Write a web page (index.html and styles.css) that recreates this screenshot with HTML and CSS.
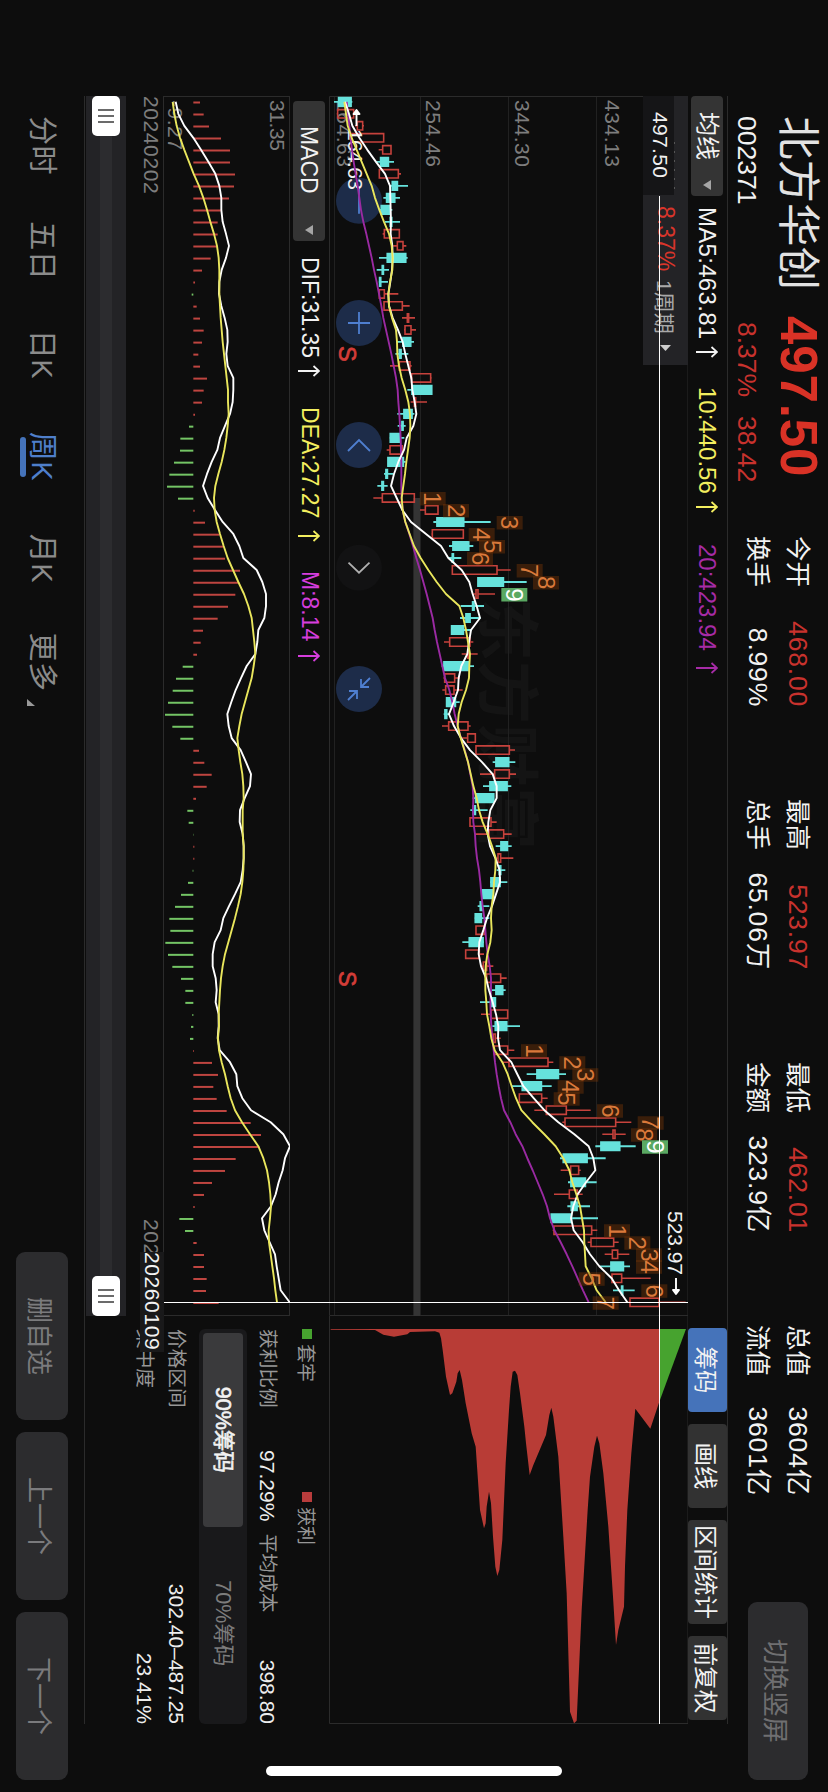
FILE: index.html
```html
<!DOCTYPE html>
<html lang="zh-CN">
<head>
  <meta charset="UTF-8" />
  <meta name="viewport" content="width=device-width, initial-scale=1.0" />
  <title>北方华创 002371</title>
  <link rel="stylesheet" href="styles.css">
</head>
<body>
  <div class="device">
  <div class="screen">
    <header class="header">
      <div class="quote">
        <div class="quote-main"><span class="name">北方华创</span><span class="price">497.50</span></div>
        <div class="quote-sub"><span class="code">002371</span><span class="pct">8.37%</span><span class="diff">38.42</span></div>
      </div>
      <div class="stats">
        <div class="stat"><span>今开</span><b class="red">468.00</b><span>换手</span><b>8.99%</b></div>
        <div class="stat"><span>最高</span><b class="red">523.97</b><span>总手</span><b>65.06万</b></div>
        <div class="stat"><span>最低</span><b class="red">462.01</b><span>金额</span><b>323.9亿</b></div>
        <div class="stat"><span>总值</span><b>3604亿</b><span>流值</span><b>3601亿</b></div>
      </div>
      <button class="btn-rotate">切换竖屏</button>
    </header>

    <div class="toolbar">
      <button class="select">均线<i class="caret"></i></button>
      <span class="ind ma5">MA5:463.81<svg class="up" viewBox="0 0 12 22"><path d="M6 22V1M1 6.5L6 1L11 6.5" /></svg></span>
      <span class="ind ma10">10:440.56<svg class="up" viewBox="0 0 12 22"><path d="M6 22V1M1 6.5L6 1L11 6.5" /></svg></span>
      <span class="ind ma20">20:423.94<svg class="up" viewBox="0 0 12 22"><path d="M6 22V1M1 6.5L6 1L11 6.5" /></svg></span>
      <div class="tools">
        <button class="tool active">筹码</button>
        <button class="tool">画线</button>
        <button class="tool wide">区间统计</button>
        <button class="tool">前复权</button>
      </div>
    </div>

    <div class="charts">
      <svg id="kline" width="1220" height="359" viewBox="0 0 1220 359"></svg>
      <svg id="chips" width="408" height="359" viewBox="0 0 408 359"></svg>
    </div>

    <div class="lower">
      <div class="lower-left">
        <div class="macd-bar">
          <button class="select macd-select">MACD<i class="caret"></i></button>
          <span class="ind dif">DIF:31.35<svg class="up" viewBox="0 0 12 22"><path d="M6 22V1M1 6.5L6 1L11 6.5" /></svg></span>
          <span class="ind dea">DEA:27.27<svg class="up" viewBox="0 0 12 22"><path d="M6 22V1M1 6.5L6 1L11 6.5" /></svg></span>
          <span class="ind m">M:8.14<svg class="up" viewBox="0 0 12 22"><path d="M6 22V1M1 6.5L6 1L11 6.5" /></svg></span>
        </div>
        <svg id="macd" width="1220" height="127" viewBox="0 0 1220 127"></svg>
        <div class="dates"><span>20240202</span><span class="date-end">20260109</span></div>
        <div class="slider">
          <div class="track"></div>
          <div class="handle"><i></i><i></i><i></i></div>
          <div class="handle"><i></i><i></i><i></i></div>
        </div>
      </div>
      <div class="panel">
        <div class="legend">
          <span><i class="dot green"></i>套牢</span>
          <span><i class="dot"></i>获利</span>
        </div>
        <div class="row"><span>获利比例</span><b class="mid">97.29%</b><span>平均成本</span><b>398.80</b></div>
        <div class="seg">
          <div class="seg-item on">90%筹码</div>
          <div class="seg-item">70%筹码</div>
        </div>
        <div class="row range"><span>价格区间</span><b>302.40–487.25</b></div>
        <div class="row focus"><span>集中度</span><b>23.41%</b></div>
      </div>
    </div>

    <footer class="footer">
      <nav class="tabs">
        <span>分时</span>
        <span>五日</span>
        <span class="k">日K</span>
        <span class="k on">周K</span>
        <span class="k">月K</span>
        <span>更多<i class="more"></i></span>
      </nav>
      <div class="actions">
        <button>删自选</button>
        <button>上一个</button>
        <button>下一个</button>
      </div>
    </footer>

    <div class="cross-h"></div>
    <div class="cross-v"></div>
    <div class="date-tag">20260109</div>
    <div class="home"></div>
  </div>
  </div>

  <script src="chart.js"></script>
</body>
</html>
```
FILE: styles.css
```css
* {
  box-sizing: border-box;
}
body {
  margin: 0;
  background: #0d0d0d;
  font-family: "Liberation Sans", "Noto Sans CJK SC", sans-serif;
  color: #f2f2f2;
}
.device {
  width: 828px;
  height: 1792px;
  overflow: hidden;
}
/* landscape screen turned clockwise */
.screen {
  position: relative;
  width: 1792px;
  height: 828px;
  padding-left: 96px;
  transform-origin: 0 0;
  transform: translateX(828px) rotate(90deg);
  background: #0d0d0d;
}
button {
  border: 0;
  padding: 0;
  font-family: inherit;
  color: inherit;
}
b {
  font-weight: normal;
}
.red {
  color: #c8322d;
}

/* header */
.header {
  display: flex;
  height: 100px;
  width: 1684px;
}
.quote {
  width: 440px;
  padding-left: 20px;
}
.quote-main {
  display: flex;
  align-items: center;
  height: 60px;
}
.name {
  width: 200px;
  font-size: 43.5px;
  line-height: 60px;
  color: #e2e2e2;
}
.price {
  font-size: 51px;
  font-weight: bold;
  line-height: 60px;
  letter-spacing: 0.9px;
  color: #d93226;
}
.quote-sub {
  display: flex;
  align-items: center;
  height: 42px;
  font-size: 26.5px;
}
.code {
  width: 206px;
}
.pct, .diff {
  color: #c8322d;
}
.pct {
  width: 94px;
}
.stats {
  display: flex;
  gap: 92px;
  padding-top: 10px;
}
.stat {
  display: grid;
  grid-template-columns: auto 1fr;
  grid-template-rows: 40px 40px;
  align-items: center;
  width: 171px;
  font-size: 25.5px;
  line-height: 40px;
}
.stat b {
  text-align: right;
  font-size: 26.5px;
  letter-spacing: 0.8px;
}
.btn-rotate {
  width: 178px;
  height: 60px;
  margin: 20px 0 0 auto;
  border-radius: 9px;
  background: #2c2c2e;
  color: #6f6f71;
  font-size: 26px;
}

/* indicator bar */
.toolbar {
  display: flex;
  align-items: center;
  width: 1628px;
  height: 40px;
  border-top: 1px solid #2b2b2b;
}
.select {
  display: flex;
  align-items: center;
  justify-content: space-between;
  width: 100px;
  height: 32px;
  padding: 0 6px 0 16px;
  border-radius: 4px;
  background: #343434;
  font-size: 24px;
  line-height: 32px;
}
.caret {
  border: 5px solid transparent;
  border-top: 8px solid #a5a5a5;
  border-bottom: 0;
}
.ind {
  display: flex;
  align-items: center;
  justify-content: space-between;
  font-size: 24px;
}
.up {
  flex-shrink: 0;
  width: 12px;
  height: 22px;
  fill: none;
  stroke: currentColor;
  stroke-width: 1.8;
}
.ma5 {
  width: 151px;
  margin-left: 11px;
  letter-spacing: 0.3px;
}
.ma10 {
  width: 126px;
  margin-left: 29px;
  color: #f3ee5f;
}
.ma20 {
  width: 130px;
  margin-left: 31px;
  color: #a62ba6;
}
.tools {
  display: flex;
  gap: 12px;
  margin-left: auto;
  padding-right: 4px;
}
.tool {
  width: 84px;
  height: 39px;
  border-radius: 4px;
  background: #323232;
  font-size: 23.5px;
}
.tool.wide {
  width: 104px;
}
.tool.active {
  background: #4573ba;
}

/* charts */
.charts {
  display: flex;
}
svg text {
  font-size: 21px;
}
.charts svg, #macd {
  display: block;
}
.frame {
  fill: none;
  stroke: #2b2b2b;
}
.grid {
  stroke: #212121;
}
.axis {
  fill: #7d7d7d;
}
.mark {
  fill: #f0f0f0;
}
.watermark {
  fill: #141414;
  font-weight: bold;
}
svg .watermark {
  font-size: 63px;
}
.band {
  fill: #343434;
}
.up-k {
  stroke: #c6423c;
  fill: none;
  stroke-width: 1.6;
}
.down-k {
  stroke: #66e2dc;
  fill: #66e2dc;
  stroke-width: 1.8;
}
.line {
  fill: none;
  stroke-width: 1.9;
  stroke-linejoin: round;
}
.white {
  stroke: #fff;
}
.yellow {
  stroke: #e9e65c;
}
.purple {
  stroke: #9a2aa2;
}
.bar-up {
  stroke: #bf4540;
  stroke-width: 2;
}
.bar-down {
  stroke: #74c565;
  stroke-width: 2;
}
.nine-box {
  fill: #7a3606;
  fill-opacity: 0.42;
}
.nine-box.last {
  fill: #5aa862;
  fill-opacity: 1;
}
svg .nine {
  font-size: 24px;
  fill: #d9793a;
  text-anchor: middle;
}
svg .nine.last {
  fill: #fff;
}
svg .sell {
  font-size: 23.5px;
  fill: #d33d38;
  stroke: #d33d38;
  stroke-width: 0.7;
}
.knob {
  fill: #1d2c49;
}
.knob.off {
  fill: #121213;
}
.knob-icon {
  fill: none;
  stroke: #4f7fd0;
  stroke-width: 1.8;
}
.knob-icon.off {
  stroke: #b0b0b0;
}
.tip {
  fill: #232326;
}
.tip-dark {
  fill: #151517;
}
svg .tip-red {
  font-size: 23px;
  fill: #d8352b;
}
svg .tip-text {
  font-size: 21px;
  fill: #a8a8a8;
}
.win {
  fill: #b83c36;
}
.lose {
  fill: #47a32f;
}

/* macd */
.lower {
  display: flex;
  height: 245px;
  width: 1628px;
  border-bottom: 1px solid #2b2b2b;
}
.lower-left {
  width: 1220px;
}
.macd-bar {
  display: flex;
  align-items: center;
  height: 39px;
}
.macd-bar .ind {
  font-size: 23px;
}
.macd-select {
  width: 140px;
  margin-left: 5px;
  padding-left: 25px;
  font-size: 23px;
}
.dif {
  width: 120px;
  margin-left: 16px;
}
.dea {
  width: 135px;
  margin-left: 30px;
  color: #f3ee5f;
}
.m {
  width: 91px;
  margin-left: 29px;
  color: #d63ddd;
}
.dates {
  display: flex;
  justify-content: space-between;
  height: 37px;
  font-size: 21px;
  line-height: 24px;
  letter-spacing: 0.6px;
  color: #7d7d7d;
}
.dates .date-end {
  width: 97px;
}
.slider {
  display: flex;
  align-items: center;
  justify-content: space-between;
  position: relative;
  height: 40px;
  background: #232326;
}
.track {
  position: absolute;
  left: 0;
  right: 0;
  top: 14px;
  height: 12px;
  background: #2c2c2f;
}
.handle {
  display: flex;
  flex-direction: row;
  align-items: center;
  justify-content: center;
  gap: 4px;
  position: relative;
  width: 40px;
  height: 28px;
  border-radius: 5px;
  background: #fff;
}
.handle i {
  width: 2px;
  height: 16px;
  background: #6b6b6b;
}

/* chips panel */
.panel {
  width: 395px;
  margin-left: 13px;
  font-size: 20px;
  color: #979797;
}
.legend {
  display: flex;
  height: 43px;
}
.legend span {
  display: flex;
  align-items: center;
  width: 163px;
  font-size: 19px;
}
.dot {
  width: 10px;
  height: 10px;
  margin-right: 5px;
  background: #b83c3c;
}
.dot.green {
  background: #47a32f;
}
.row {
  display: flex;
  align-items: center;
  justify-content: space-between;
  height: 37px;
  font-size: 19.7px;
  line-height: 37px;
}
.row b {
  font-size: 21px;
  color: #ededed;
}
.row .mid {
  margin-left: 30px;
}
.row .mid + span {
  margin-right: 35px;
}
.seg {
  display: flex;
  height: 48px;
  margin-top: 2px;
  padding: 4px;
  border-radius: 6px;
  background: #19191b;
}
.seg-item {
  flex: 1;
  border-radius: 4px;
  font-size: 21.5px;
  line-height: 40px;
  text-align: center;
  color: #7c7c7c;
}
.seg-item.on {
  background: #3a3a3c;
  -webkit-text-stroke: 0.6px #f2f2f2;
  color: #f2f2f2;
}
.range {
  margin-top: 4px;
}
.focus {
  height: 27px;
}

/* footer */
.footer {
  display: flex;
  width: 1684px;
  height: 84px;
}
.tabs {
  display: flex;
  gap: 46px;
  padding: 20px 0 0 20px;
  font-size: 29px;
  line-height: 44px;
  letter-spacing: 0.6px;
  color: #8b8b8b;
}
.tabs span {
  position: relative;
  height: 44px;
  white-space: nowrap;
}
.tabs .k {
  width: 56px;
  text-align: center;
}
.tabs .on {
  color: #4f7fcb;
}
.tabs .on::after {
  content: "";
  position: absolute;
  left: 9px;
  top: 38px;
  width: 40px;
  height: 6px;
  border-radius: 3px;
  background: #4573ba;
}
.more {
  position: absolute;
  left: 67px;
  top: 29px;
  border-left: 7px solid transparent;
  border-bottom: 8px solid #999;
}
.actions {
  display: flex;
  gap: 12px;
  margin-left: auto;
  padding-top: 16px;
}
.actions button {
  width: 168px;
  height: 52px;
  border-radius: 9px;
  background: #2c2c2e;
  color: #7b7b7d;
  font-size: 26px;
}

/* crosshair */
.cross-h {
  position: absolute;
  left: 196px;
  top: 168px;
  width: 1528px;
  height: 1px;
  background: #fff;
}
.cross-v {
  position: absolute;
  left: 1302px;
  top: 140px;
  width: 1px;
  height: 525px;
  background: #fff;
}
.date-tag {
  position: absolute;
  left: 1252px;
  top: 664px;
  width: 100px;
  height: 24px;
  background: #19191a;
  font-size: 21px;
  line-height: 24px;
  letter-spacing: 0.6px;
}
.home {
  position: absolute;
  left: 1766px;
  top: 266px;
  width: 10px;
  height: 296px;
  border-radius: 5px;
  background: #fff;
}
```
FILE: chart.js
```js
const NS = 'http://www.w3.org/2000/svg';

function add(svg, tag, attrs, text) {
  const el = document.createElementNS(NS, tag);
  for (const k in attrs) el.setAttribute(k, attrs[k]);
  if (text !== undefined) el.textContent = text;
  svg.appendChild(el);
  return el;
}

const px = i => +(5.8 + i * 12.005).toFixed(2);
const ky = v => +(368 - v / 3).toFixed(2);
const my = v => +(290 - v / 3).toFixed(2);

// direction, low, body low, body high, high
const candles = `c 42 56 93 97|r 50 53 101 103|r 105 112 128 132|r 93 95 191 191|r 176 188 213 213|c 170 182 205 222
r 176 178 235 243|c 208 217 232 264|c 190 200 224 240|c 178 184 210 217|c 195 211 215 240|r 188 193 238 240
r 220 232 249 259|c 177 202 257 263|c 170 187 190 207|c 176 179 182 204|r 176 178 193 235|r 190 192 247 269
r 246 262 266 285|r 252 255 273 288|c 230 249 272 282|c 226 238 243 265|r 210 238 270 275|r 270 275 332 335
c 262 276 335 335|r 272 283 287 321|c 232 252 276 283|c 233 246 249 257|c 208 211 238 253|r 200 210 247 247
c 203 204 250 257|c 192 198 202 220|c 172 186 190 203|r 160 187 283 283|r 300 316 354 354|c 340 351 431 512
r 334 337 430 430|c 387 399 446 460|c 387 397 400 424|r 395 397 531 572|c 472 474 550 620|r 458 468 474 525
c 422 458 462 492|c 420 438 450 482|c 394 395 430 455|r 372 389 450 460|r 425 443 447 473|c 365 372 446 462
r 370 374 404 420|r 367 377 402 428|c 378 380 406 419|c 371 375 380 388|r 366 386 444 452|r 425 443 466 466
r 466 468 568 585|c 518 528 566 586|r 480 524 568 588|c 489 510 561 574|c 458 467 521 521|c 451 460 466 503
r 448 450 513 530|r 466 507 551 575|c 527 543 562 575|r 530 534 542 580|c 530 538 542 556|c 510 513 540 562
c 487 487 520 520|c 473 481 486 508|c 463 466 484 508|r 466 468 493 497|c 427 448 489 492|r 435 437 478 492
r 485 490 500 520|r 497 500 542 560|c 516 528 548 557|c 480 513 526 528|r 483 513 563 563|c 517 526 560 600
r 515 520 526 542|r 520 523 563 583|r 545 567 684 700|c 620 651 715 738|c 575 607 664 695|r 596 598 665 683
r 643 679 739 812|r 727 735 887 934|r 847 879 885 917|c 826 843 899 947|c 720 730 801 857|r 722 752 776 782
c 744 753 796 830|r 702 748 772 788|c 742 754 771 810|c 693 694 754 834|r 698 702 815 832|r 803 813 881 896
r 854 877 893 928|c 840 873 910 930|r 873 876 905 992|c 879 905 908 944|r 925 930 1017 1097`
  .split(/[|\n]/).map(s => s.split(' ')).map(([dir, ...v]) => ({ dir, v: v.map(Number) }));

const ma5 = [75,87,97,118,142,168,195,210,211,212,213,212,217,218,216,211,205,207,218,234,248,256,265,274,277,
  284,289,280,260,252,235,222,213,230,247,273,318,363,385,425,448,458,470,480,453,447,442,424,416,414,
  401,387,402,423,450,486,518,530,530,511,505,503,510,526,539,540,528,516,501,490,478,476,483,498,507,
  518,528,535,534,540,574,592,610,641,673,715,763,806,820,826,798,773,760,753,761,788,810,838,875,897,922];
const ma10 = [73,78,83,95,110,125,140,155,165,178,192,207,215,218,217,210,205,207,216,228,231,232,237,245,256,
  265,270,271,269,264,259,255,250,245,248,256,269,282,302,325,350,378,418,430,438,444,450,448,447,438,
  425,416,413,422,433,444,452,460,470,477,488,503,516,527,526,522,520,515,513,515,511,502,497,496,496,
  499,501,508,514,524,547,563,575,588,604,637,673,707,730,748,757,769,780,786,792,793,795,797,815,830,857];
const ma20 = [80,84,88,92,96,101,107,113,118,123,130,139,147,155,162,170,177,184,190,198,206,214,221,228,233,
  235,238,240,242,243,244,244,244,245,248,256,268,279,289,300,310,320,329,338,344,351,359,367,375,388,
  397,404,413,423,434,444,451,458,460,459,460,465,467,471,477,481,484,488,493,496,499,503,509,513,513,
  511,512,514,517,521,525,530,536,543,552,571,587,607,622,638,653,668,681,690,703,722,740,757,773,789,806];

// candle index, position, count
const nines = [[33,338,1],[34,408,2],[35,569,3],[36,485,4],[37,516,5],[38,480,6],[39,629,7],[40,678,8],[41,583,9],
  [79,642,1],[80,757,2],[81,796,3],[82,752,4],[83,740,5],[84,870,6],[85,992,7],[86,972,8],[87,1005,9],
  [94,891,1],[95,952,2],[96,987,3],[97,987,4],[98,815,5],[99,1003,6],[100,857,7]];

const hist = [600,611,627,663,690,690,705,702,687,662,653,653,652,632,606,585,575,590,600,611,606,595,600,621,611,
  606,585,567,541,540,522,508,501,534,584,615,658,670,675,720,718,706,684,653,609,602,591,548,528,518,
  504,495,517,541,597,613,635,620,588,562,566,579,583,583,578,564,543,525,508,511,496,504,517,543,556,
  556,577,573,570,582,636,654,640,650,680,752,783,778,707,675,636,612,584,538,555,590,612,612,620,618,656];
const dif = [527,535,553,580,603,625,646,658,664,664,668,678,687,678,665,658,657,664,674,682,683,679,683,700,700,
  698,690,675,660,652,635,621,609,623,645,668,700,718,730,770,787,798,798,793,775,772,766,740,723,707,
  694,682,686,695,722,738,753,750,734,720,719,728,731,731,728,722,705,687,670,662,644,638,638,647,650,
  647,656,656,653,659,690,709,712,727,753,812,850,870,855,848,836,827,813,786,793,809,825,830,836,842,869];
const dea = [518,523,530,540,553,567,581,597,610,621,631,642,651,656,658,658,658,660,662,665,668,672,676,680,684,
  684,686,683,679,673,665,655,646,642,644,650,660,671,683,699,715,732,745,755,759,763,766,761,755,745,
  735,725,718,712,716,721,727,730,731,728,728,728,731,731,730,727,722,714,705,695,685,675,668,663,660,
  658,656,657,654,657,665,675,683,692,705,726,750,775,790,801,807,811,813,810,806,807,812,817,822,826,831];

const path = (arr, y) => arr.map((v, i) => (i ? 'L' : 'M') + px(i) + ' ' + y(v)).join('');

function drawKline() {
  const svg = document.getElementById('kline');
  add(svg, 'text', { class: 'watermark', x: 502, y: 203 }, '东方财富');
  [91, 179, 267].forEach(y => add(svg, 'path', { class: 'grid', d: `M0 ${y + 0.5}H1220` }));
  add(svg, 'path', { class: 'grid', d: 'M0 353.5H1220' });
  add(svg, 'path', { class: 'frame', d: 'M0.5 0V358.5H1219.5V0' });
  add(svg, 'path', { class: 'frame', d: 'M0 0H1220' });
  add(svg, 'rect', { class: 'band', x: 402, y: 268, width: 818, height: 6.6 });

  [[83, '434.13'], [173, '344.30'], [262, '254.46'], [351, '164.63']].forEach(([y, t]) =>
    add(svg, 'text', { class: 'axis', x: 4, y, textLength: 67 }, t));

  add(svg, 'rect', { class: 'tip', x: 0, y: 0, width: 269, height: 45 });
  add(svg, 'rect', { class: 'tip-dark', x: 0, y: 14, width: 99, height: 31 });
  add(svg, 'path', { d: 'M46 13.5H99', 'stroke-dasharray': '2 7', stroke: '#555' });
  add(svg, 'text', { class: 'mark', x: 16, y: 35, textLength: 66 }, '497.50');
  add(svg, 'text', { class: 'tip-red', x: 110, y: 30.5 }, '8.37%');
  add(svg, 'text', { class: 'tip-text', x: 184, y: 31 }, '1周期');
  add(svg, 'path', { fill: '#ccc', d: 'M249 17V28L255 22.5Z' });

  // zoom / pan buttons
  const icons = [
    [104.7, 'M-13 0H13'],
    [227, 'M-11 0H11M0-11V11'],
    [349, 'M6-11L-5 0L6 11'],
    [471.7, 'M-5-10.5L5 0L-5 10.5'],
    [593, 'M-11-11L-2-2M-2-10V-2H-10M11 11L2 2M2 10V2H10']
  ];
  icons.forEach(([x, d], i) => {
    const off = i === 3 ? ' off' : '';
    add(svg, 'circle', { class: 'knob' + off, cx: x, cy: 329, r: 23 });
    add(svg, 'path', { class: 'knob-icon' + off, d, transform: `translate(${x} 329)` });
  });
  add(svg, 'text', { class: 'sell', x: 250, y: 349.5 }, 'S');
  add(svg, 'text', { class: 'sell', x: 875, y: 349.5 }, 'S');

  candles.forEach(({ dir, v }, i) => {
    const x = px(i), [l, a, b, h] = v.map(ky);
    const bar = `M${x} ${l}V${a}M${x} ${b}V${h}M${x - 4.2} ${a}H${x + 4.2}V${b}H${x - 4.2}Z`;
    add(svg, 'path', { class: dir === 'r' ? 'up-k' : 'down-k', d: bar });
  });

  add(svg, 'text', { class: 'mark', x: 33, y: 340, textLength: 61 }, '164.63');
  add(svg, 'path', { class: 'line white', d: 'M30 331.5H14M18 328.5L14 331.5L18 334.5Z' });
  add(svg, 'text', { class: 'mark', x: 1115, y: 20.5, textLength: 64 }, '523.97');
  add(svg, 'path', { class: 'line white', d: 'M1182 12H1198M1194 9L1198 12L1194 15Z' });

  add(svg, 'path', { class: 'line purple', d: path(ma20, ky) });
  add(svg, 'path', { class: 'line white', d: path(ma5, ky) });
  add(svg, 'path', { class: 'line yellow', d: path(ma10, ky) });

  nines.forEach(([i, v, n]) => {
    const last = n === 9 ? ' last' : '';
    add(svg, 'rect', { class: 'nine-box' + last, x: px(i) - 6, y: ky(v) - 13, width: 13.5, height: 26 });
    add(svg, 'text', { class: 'nine' + last, x: px(i) + 0.8, y: ky(v) + 8.5 }, n);
  });
}

function drawMacd() {
  const svg = document.getElementById('macd');
  add(svg, 'rect', { class: 'frame', x: 0.5, y: 0.5, width: 1219, height: 126 });
  add(svg, 'text', { class: 'axis', x: 4, y: 20, textLength: 51 }, '31.35');
  add(svg, 'text', { class: 'axis', x: 4, y: 122, textLength: 50 }, '-9.27');
  hist.forEach((v, i) =>
    add(svg, 'path', { class: v > 580 ? 'bar-up' : 'bar-down', d: `M${px(i) + 0.7} ${my(580)}V${my(v)}` }));
  add(svg, 'path', { class: 'line white', d: path(dif, my) });
  add(svg, 'path', { class: 'line yellow', d: path(dea, my) });
}

function drawChips() {
  const svg = document.getElementById('chips');
  // price, amount
  const pts = [[32,59],[165,60],[190,74],[222,80],[262,73],[270,66],[345,64],[358,68],[363,85],[368,120],[378,200],
    [390,255],[397,250],[409,215],[413,190],[419,180],[426,210],[437,280],[455,370],[467,410],[480,600],[492,655],
    [497,640],[500,590],[507,545],[513,580],[519,680],[526,770],[532,798],[538,780],[547,690],[557,460],[567,300],
    [572,230],[578,185],[585,182],[592,195],[600,250],[613,350],[618,400],[629,495],[640,465],[678,375],[688,315],
    [694,293],[700,320],[715,440],[730,680],[740,850],[750,1205],[762,1240],[770,1232],[785,900],[803,600],
    [810,500],[823,410],[831,377],[838,400],[850,490],[865,650],[879,860],[888,1005],[895,960],[912,890],
    [915,770],[922,600],[934,430],[946,296],[991,356],[1018,275]];
  const pt = ([v, w]) => (w / 3 - 6).toFixed(1) + ',' + ky(v);
  add(svg, 'path', { class: 'frame', d: 'M0 0H408M0 358.5H407.5V0' });
  add(svg, 'polygon', { class: 'win', points: [[32, 57], ...pts, [1018, 57]].map(pt).join(' ') });
  add(svg, 'polygon', { class: 'lose', points: [[1018, 57], [1018, 275], [1098, 57]].map(pt).join(' ') });
}

drawKline();
drawMacd();
drawChips();
```
